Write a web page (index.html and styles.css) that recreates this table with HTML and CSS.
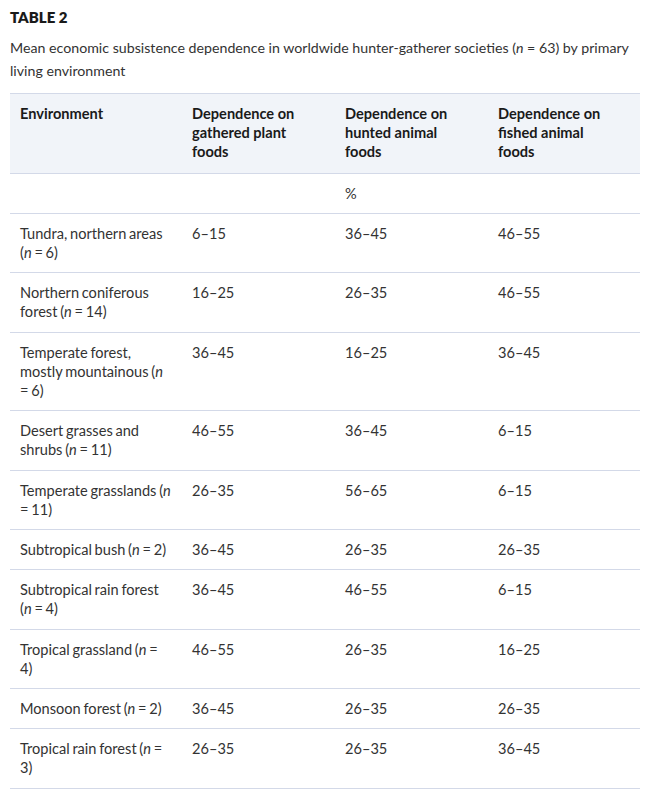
FILE: index.html
```html
<!DOCTYPE html>
<html lang="en">
<head>
<meta charset="utf-8">
<title>Table 2</title>
<link rel="stylesheet" href="styles.css">
</head>
<body>
<div class="wrap">
  <h2 class="title">TABLE 2</h2>
  <p class="caption">Mean economic subsistence dependence in worldwide hunter-gatherer societies (<i>n</i> = 63) by primary living environment</p>
  <table class="data">
    <thead>
      <tr>
        <th class="c1">Environment</th>
        <th class="c2">Dependence on gathered plant foods</th>
        <th class="c3">Dependence on hunted animal foods</th>
        <th class="c4">Dependence on fished animal foods</th>
      </tr>
    </thead>
    <tbody>
      <tr><td></td><td></td><td>%</td><td></td></tr>
      <tr><td>Tundra, northern areas (<i>n</i> = 6)</td><td>6–15</td><td>36–45</td><td>46–55</td></tr>
      <tr><td>Northern coniferous forest (<i>n</i> = 14)</td><td>16–25</td><td>26–35</td><td>46–55</td></tr>
      <tr><td>Temperate forest, mostly mountainous (<i>n</i> = 6)</td><td>36–45</td><td>16–25</td><td>36–45</td></tr>
      <tr><td>Desert grasses and shrubs (<i>n</i> = 11)</td><td>46–55</td><td>36–45</td><td>6–15</td></tr>
      <tr><td>Temperate grasslands (<i>n</i> = 11)</td><td>26–35</td><td>56–65</td><td>6–15</td></tr>
      <tr><td>Subtropical bush (<i>n</i> = 2)</td><td>36–45</td><td>26–35</td><td>26–35</td></tr>
      <tr><td>Subtropical rain forest (<i>n</i> = 4)</td><td>36–45</td><td>46–55</td><td>6–15</td></tr>
      <tr><td>Tropical grassland (<i>n</i> = 4)</td><td>46–55</td><td>26–35</td><td>16–25</td></tr>
      <tr><td>Monsoon forest (<i>n</i> = 2)</td><td>36–45</td><td>26–35</td><td>26–35</td></tr>
      <tr><td>Tropical rain forest (<i>n</i> = 3)</td><td>26–35</td><td>26–35</td><td>36–45</td></tr>
    </tbody>
  </table>
</div>
</body>
</html>
```
FILE: styles.css
```css
html, body {
  margin: 0;
  padding: 0;
  background: #ffffff;
}
body {
  font-family: Lato, "Noto Sans", sans-serif;
  color: #1a1a1a;
}
.wrap {
  padding: 7px 9px 0 10px;
}
.title {
  margin: 0;
  font-size: 15px;
  line-height: 20px;
  font-weight: 800;
  color: #1a1a1a;
}
.caption {
  margin: 9px 0 11px;
  font-size: 14.2px;
  line-height: 23px;
  color: #333333;
}
.data {
  width: 630px;
  border-collapse: collapse;
  table-layout: fixed;
  font-size: 14.6px;
  line-height: 19.2px;
  color: #333333;
}
.data th, .data td {
  text-align: left;
  vertical-align: top;
  padding: 10px;
  border-bottom: 1px solid #d3d9e8;
}
.data td {
  word-spacing: -1px;
}
.data thead tr {
  background: #f1f4f9;
  border-top: 1px solid #d3d9e8;
}
.data th {
  font-weight: 700;
  color: #1a1a1a;
  padding: 10px 20px 11px 10px;
}
.c1 { width: 142px; }
.c2 { width: 123px; }
.c3 { width: 123px; }
.c4 { width: 122px; }
```
